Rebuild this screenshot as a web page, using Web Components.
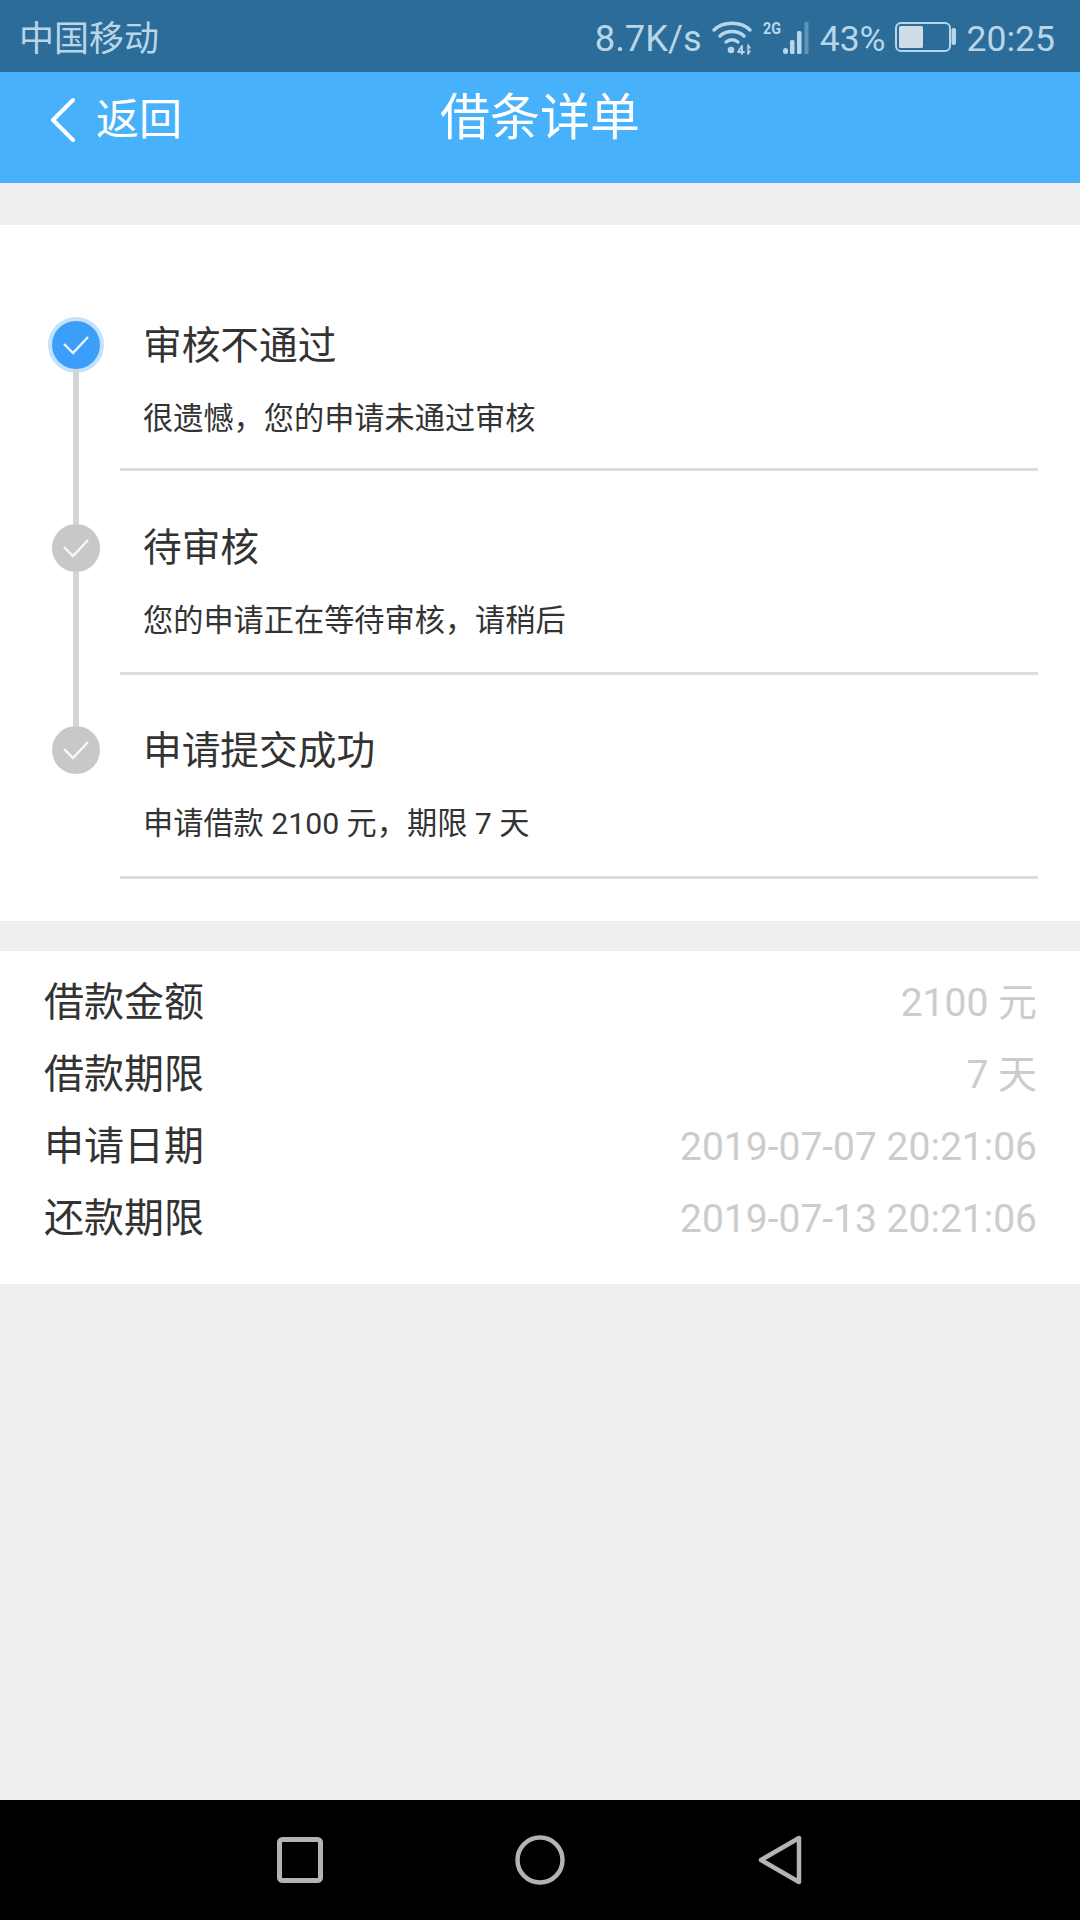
<!DOCTYPE html>
<html lang="zh"><head><meta charset="utf-8"><title>借条详单</title>
<style>
html,body{margin:0;padding:0;background:#efefef}
body{width:1080px;height:1920px;font-family:Roboto,"Noto Sans CJK SC",sans-serif;display:flex;flex-direction:column;overflow:hidden}
</style></head><body>
<status-bar></status-bar>
<nav-header></nav-header>
<main-page>
<loan-timeline>
<timeline-step active first top="54" text="51" title="审核不通过" desc="很遗憾，您的申请未通过审核"></timeline-step>
<timeline-step top="53" text="49" title="待审核" desc="您的申请正在等待审核，请稍后"></timeline-step>
<timeline-step last top="51" text="48" title="申请提交成功" desc="申请借款 2100 元，期限 7 天"></timeline-step>
</loan-timeline>
<detail-list>
<detail-row label="借款金额" value="2100 元"></detail-row>
<detail-row label="借款期限" value="7 天"></detail-row>
<detail-row label="申请日期" value="2019-07-07 20:21:06"></detail-row>
<detail-row label="还款期限" value="2019-07-13 20:21:06"></detail-row>
</detail-list>
</main-page>
<system-nav></system-nav>
<script>
function def(name, css, html){
  customElements.define(name, class extends HTMLElement{
    connectedCallback(){
      if(this.shadowRoot) return;
      const r=this.attachShadow({mode:'open'});
      const get=k=>this.getAttribute(k)||'';
      r.innerHTML='<style>'+css+'</style>'+(typeof html==='function'?html(get,this):html);
    }
  });
}
const CJK='Roboto,"Noto Sans CJK SC",sans-serif';
def('status-bar',`
:host{display:flex;align-items:center;height:72px;background:#2b6c99;color:#b9d6e8;font:400 35.500px/64px ${CJK};padding:0 25px 0 19px;flex:none}
.c{flex:1;font-size:35px;padding-top:8px}
.r{display:flex;align-items:center}
.t{padding-top:6px}
svg{display:block;flex:none}
`,`
<span class="c">中国移动</span>
<div class="r">
<span class="t" style="font-size:36.300px">8.7K/s</span>
<svg style="margin-left:10px;margin-top:4px" width="42" height="34" viewBox="0 0 42 34" fill="none" stroke="#b9d6e8" stroke-width="3.4" stroke-linecap="round">
<path d="M2 9C11 0 29 0 38 9"/><path d="M8 15C14 9 26 9 32 15"/><path d="M14 21C17.500 18 22.500 18 26 21"/>
<circle cx="19" cy="29" r="3.300" fill="#b9d6e8" stroke="none"/>
<path d="M26 31h6M30 25l-4 6M30 25v8" stroke-width="1.800"/><path d="M36 24v9M36 24l2 3M36 33l2-3" stroke-width="1.500"/>
</svg>
<svg style="margin-left:9px;margin-top:4px" width="48" height="40" viewBox="0 -3 48 40">
<text x="0" y="13" font-family="Roboto,sans-serif" font-size="17" font-weight="700" fill="#b9d6e8" textLength="18" lengthAdjust="spacingAndGlyphs">2G</text>
<rect x="20" y="27" width="5" height="6" rx="2.500" fill="#b9d6e8"/>
<rect x="27" y="19" width="4.500" height="14" rx="1.500" fill="#b9d6e8"/>
<rect x="34" y="10" width="4.500" height="23" rx="1.500" fill="#b9d6e8"/>
<rect x="41.500" y="1" width="4" height="32" fill="#5f93b8"/>
</svg>
<span class="t" style="margin-left:9px">43%</span>
<svg style="margin-left:9px;margin-top:2px" width="62" height="30" viewBox="0 0 62 30">
<rect x="1" y="1" width="54" height="28" rx="5" fill="none" stroke="#b9d6e8" stroke-width="2"/>
<rect x="4" y="4" width="24" height="22" rx="1.500" fill="#cfdde6"/>
<rect x="56.500" y="6" width="4.500" height="17" rx="2" fill="#b9d6e8"/>
</svg>
<span class="t" style="margin-left:10px">20:25</span>
</div>`);
def('nav-header',`
:host{display:block;height:111px;background:#48b1fb;color:#fff;flex:none;font-family:${CJK}}
.bar{display:grid;grid-template-columns:1fr auto 1fr;align-items:flex-start;height:100%}
.back{display:flex;align-items:center;height:96px;gap:21px;font-size:43px;line-height:96px;padding-left:50px}
svg{display:block}
.t{font-size:50px;line-height:92px}
`,`<div class="bar"><div class="back">
<svg width="25" height="46" viewBox="0 0 25 46" fill="none" stroke="#fff" stroke-width="4" stroke-linecap="round" stroke-linejoin="round"><path d="M23 3L3 23L23 43"/></svg>
<span>返回</span></div><div class="t">借条详单</div><div></div></div>`);
def('main-page',`:host{display:block;flex:1;padding-top:42px;background:#efefef}`,`<slot></slot>`);
def('loan-timeline',`:host{display:block;background:#fff;padding:42px 42px 42px 52px;height:696px;box-sizing:border-box}`,`<slot></slot>`);
def('timeline-step',`
:host{display:grid;grid-template-columns:48px 1fr;column-gap:20px;height:204px;color:#333;font-family:${CJK}}
.rail{display:flex;flex-direction:column;align-items:center;height:204px}
.seg{width:6px;background:#d4d4d4;flex:none}
.seg.end{flex:1}
.hide{background:transparent}
.dot{width:48px;height:48px;border-radius:50%;background:#c8c8c8;flex:none;display:flex;align-items:center;justify-content:center}
.active .dot{background:#3b9ffa;box-shadow:0 0 0 4px #c3e2fb}
.body{border-bottom:3px solid #dcdcdc;box-sizing:border-box;height:204px;padding-left:23px}
.title{font-size:38.700px;line-height:56px}
.desc{font-size:30.200px;line-height:44px;margin-top:23px}
`,(g,h)=>`<div class="rail ${h.hasAttribute('active')?'active':''}">
<div class="seg ${h.hasAttribute('first')?'hide':''}" style="height:${g('top')}px"></div>
<div class="dot"><svg width="28" height="20" viewBox="0 0 28 20" fill="none" stroke="#fff" stroke-opacity=".9" stroke-width="2.300"><path d="M2 9L11 18L26 2"/></svg></div>
<div class="seg end ${h.hasAttribute('last')?'hide':''}"></div></div>
<div class="body" style="padding-top:${g('text')}px"><div class="title">${g('title')}</div><div class="desc">${g('desc')}</div></div>`);
def('detail-list',`:host{display:block;background:#fff;margin-top:30px;padding:16px 43px 29px 44px;height:333px;box-sizing:border-box}`,`<slot></slot>`);
def('detail-row',`
:host{display:flex;justify-content:space-between;align-items:center;height:72px;font:400 40px/72px ${CJK}}
.l{color:#333}.v{color:#ccc;font-size:39px}
`,g=>`<span class="l">${g('label')}</span><span class="v">${g('value')}</span>`);
def('system-nav',`
:host{display:flex;justify-content:center;align-items:center;height:120px;background:#000;flex:none}
div{width:240px;display:flex;justify-content:center}
svg{display:block}
`,`<div><svg width="46" height="46" viewBox="0 0 46 46"><rect x="2.500" y="2.500" width="41" height="41" rx="3" fill="none" stroke="#b3b3b3" stroke-width="5"/></svg></div>
<div><svg width="50" height="50" viewBox="0 0 50 50"><circle cx="25" cy="25" r="22.500" fill="none" stroke="#b3b3b3" stroke-width="4.500"/></svg></div>
<div><svg width="44" height="50" viewBox="0 0 44 50"><path d="M41 3V47L3 25Z" fill="none" stroke="#b3b3b3" stroke-width="4.500" stroke-linejoin="round"/></svg></div>`);
</script>
</body></html>
